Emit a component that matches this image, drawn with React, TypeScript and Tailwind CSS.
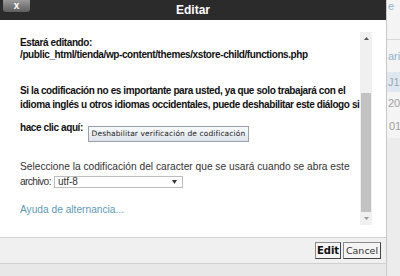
import React from "react"

const font = { fontFamily: '"Liberation Sans", Arial, sans-serif' }
const tahoma = { fontFamily: '"DejaVu Sans", Verdana, sans-serif' }

function Scrollbar() {
  return (
    <div className="mt-[12px] flex h-[193px] w-[12px] flex-col items-center bg-[#f0f0f0]">
      <div className="flex h-[12px] w-full items-center justify-center">
        <svg width="5" height="3" viewBox="0 0 5 3">
          <path d="M0 3 L2.5 0 L5 3 Z" fill="#555" />
        </svg>
      </div>
      <div className="h-[49px]" />
      <div className="w-[10px] flex-1 bg-[#c2c2c2]" />
      <div className="flex h-[13px] w-full items-center justify-center">
        <svg width="5" height="3" viewBox="0 0 5 3">
          <path d="M0 0 L5 0 L2.5 3 Z" fill="#999" />
        </svg>
      </div>
    </div>
  )
}

function PageEdge() {
  return (
    <div className="flex w-[14px] flex-col overflow-hidden border-l border-[#c8c8c8] bg-[#f4f4f4] text-[11px] leading-none whitespace-nowrap text-[#8fb3cc]">
      <div className="h-[40px] border-b border-[#d8d8d8] pl-[1px] pt-[1px]">e</div>
      <div className="flex h-[32px] items-center pl-[1px]">ario</div>
      <div className="flex h-[20px] items-center bg-[#dfe8f0] pl-[1px] text-[#9aa8b4]">J19</div>
      <div className="flex h-[22px] items-center pl-[1px] text-[#a0a0a0]">201</div>
      <div className="flex h-[24px] items-center pl-[2px] text-[#a0a0a0]">01</div>
      <div className="flex-1 bg-[#ececec]" />
    </div>
  )
}

export default function App() {
  return (
    <div className="flex h-[276px] w-[400px] overflow-hidden bg-[#e6e6e6]" style={font}>
      <div className="flex w-[386px] flex-col">
        <header className="relative flex h-[20px] shrink-0 items-center justify-center bg-[#2b2b2b]">
          <div className="absolute left-[3px] top-0 flex h-[12px] w-[27px] items-center justify-center rounded-b-[3px] bg-gradient-to-b from-[#9a9a9a] to-[#5e5e5e] text-[10px] font-bold leading-none text-white">
            x
          </div>
          <span className="text-[12px] font-bold text-white">Editar</span>
        </header>

        <div className="flex h-[217px] shrink-0 bg-white">
          <div className="w-[354px] shrink-0 whitespace-nowrap pl-[20px] text-[#111]">
            <div className="pt-[17px] text-[10px] font-bold leading-[12px] tracking-[-0.4px]">
              <p>Estará editando:</p>
              <p>/public_html/tienda/wp-content/themes/xstore-child/functions.php</p>
            </div>
            <div className="pt-[23px] text-[10px] font-bold leading-[14px] tracking-[-0.4px]">
              <p>Si la codificación no es importante para usted, ya que solo trabajará con el</p>
              <p>idioma inglés u otros idiomas occidentales, puede deshabilitar este diálogo si</p>
            </div>
            <div className="mt-[10px] flex items-start gap-[5px] text-[10px] font-bold leading-[12px] tracking-[-0.4px]">
              <span>hace clic aquí:</span>
              <button
                className="mt-[4px] h-[16px] w-[161px] border border-[#9aa3ad] bg-gradient-to-b from-[#f8fafc] to-[#dde4ea] text-[7.5px] font-normal leading-none tracking-[0.1px] text-[#222]"
                style={tahoma}
              >
                Deshabilitar verificación de codificación
              </button>
            </div>
            <p className="mt-[18px] text-[10.2px] leading-[13px] text-[#333]">
              Seleccione la codificación del caracter que se usará cuando se abra este
            </p>
            <div className="mt-[3px] flex items-center gap-[3px] text-[10.2px] leading-[12px] text-[#333]">
              <span className="tracking-[-0.6px]">archivo:</span>
              <div className="flex h-[12px] w-[129px] items-center justify-between border border-[#bdbdbd] bg-white pl-[3px] pr-[5px] text-[10px] leading-none">
                <span>utf-8</span>
                <svg width="5" height="4" viewBox="0 0 5 4">
                  <path d="M0 0 L5 0 L2.5 4 Z" fill="#333" />
                </svg>
              </div>
            </div>
            <p className="mt-[15px] text-[10.2px] leading-[13px] text-[#5e9ab5]">Ayuda de alternancia...</p>
          </div>
          <div className="flex flex-1 justify-start pl-[6px]">
            <Scrollbar />
          </div>
        </div>

        <footer className="flex h-[27px] shrink-0 items-center justify-end gap-[2px] border-y border-[#d0d0d0] bg-[#f0f0f0] pr-[5px]">
          <button
            className="h-[17px] w-[26px] border border-[#8a8a8a] border-b-[#444] border-r-[#444] bg-[#f4f4f4] text-[10px] font-bold leading-none text-[#111]"
            style={tahoma}
          >
            Edit
          </button>
          <button
            className="h-[17px] w-[38px] border border-[#8a8a8a] border-b-[#444] border-r-[#444] bg-[#f4f4f4] text-[9.5px] leading-none text-[#333]"
            style={tahoma}
          >
            Cancel
          </button>
        </footer>
        <div className="flex-1 bg-[#e8e8e8]" />
      </div>
      <PageEdge />
    </div>
  )
}
